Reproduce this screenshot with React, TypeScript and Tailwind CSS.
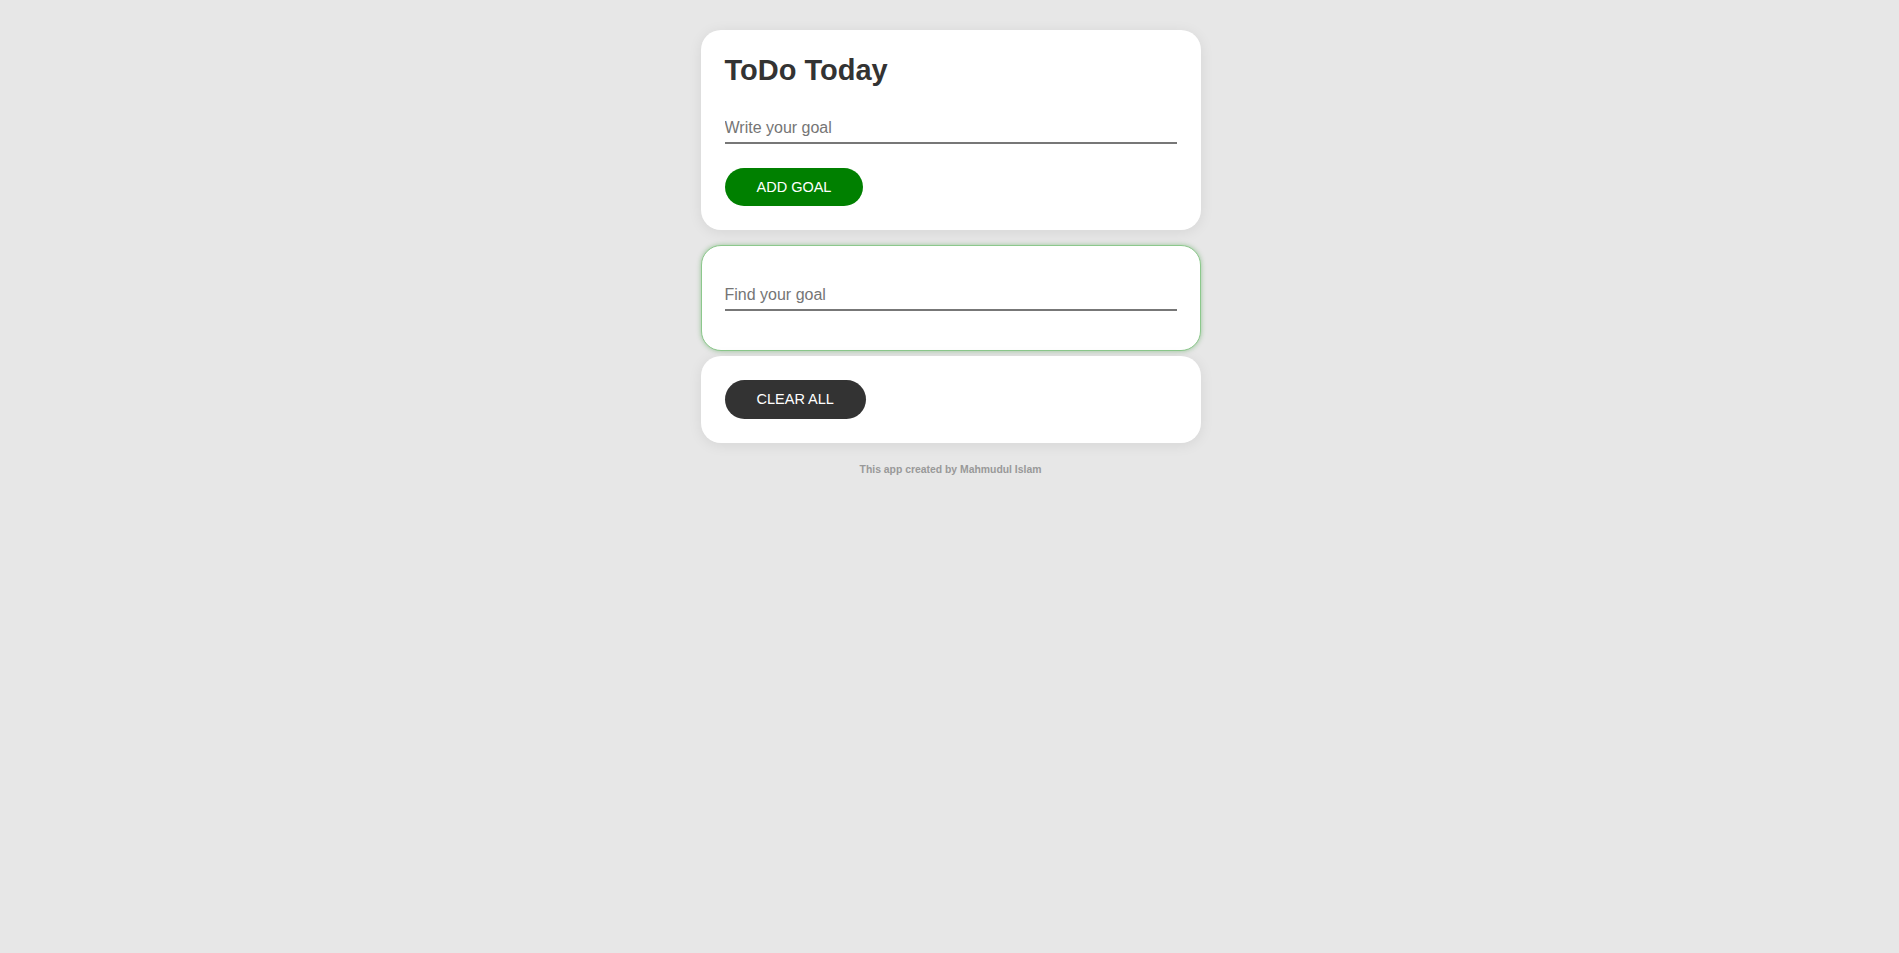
import { useState } from "react";

export default function App() {
  const [goal, setGoal] = useState("");
  const [search, setSearch] = useState("");

  return (
    <div className="min-h-screen bg-[#e7e7e7] pt-[30px] font-['Liberation_Sans',Arial,sans-serif]">
      <div className="mx-auto w-[500px] translate-x-[1px]">
        {/* add goal */}
        <div className="bg-white rounded-[20px] p-6 shadow-[0_2px_14px_rgba(0,0,0,0.08)]">
          <h1 className="text-[29px] leading-[33px] font-bold text-[#333]">ToDo Today</h1>
          <input
            value={goal}
            onChange={(e) => setGoal(e.target.value)}
            placeholder="Write your goal"
            className="mt-[23px] block w-full h-[34px] pt-[4px] border-b-2 border-[#777] text-base text-[#333] placeholder:text-[#757575] outline-none bg-transparent"
          />
          <button className="mt-6 h-[38px] pt-[1px] px-8 rounded-full bg-[#008000] text-white text-[14.5px]">ADD GOAL</button>
        </div>

        {/* search */}
        <div className="mt-[15px] bg-white rounded-[20px] border border-[#8cc88c] px-[23px] pt-[31px] pb-[39px] shadow-[0_0_5px_rgba(0,128,0,0.35)]">
          <input
            value={search}
            onChange={(e) => setSearch(e.target.value)}
            placeholder="Find your goal"
            className="block w-full h-[34px] pt-[4px] border-b-2 border-[#777] text-base text-[#333] placeholder:text-[#757575] outline-none bg-transparent"
          />
        </div>

        {/* clear */}
        <div className="mt-[5px] bg-white rounded-[20px] p-6 shadow-[0_2px_14px_rgba(0,0,0,0.08)]">
          <button className="h-[39px] px-8 rounded-full bg-[#333] text-white text-[14.5px]">CLEAR ALL</button>
        </div>

        <p className="mt-[19px] text-center text-[10.4px] font-bold text-[#999]">This app created by Mahmudul Islam</p>
      </div>
    </div>
  );
}
